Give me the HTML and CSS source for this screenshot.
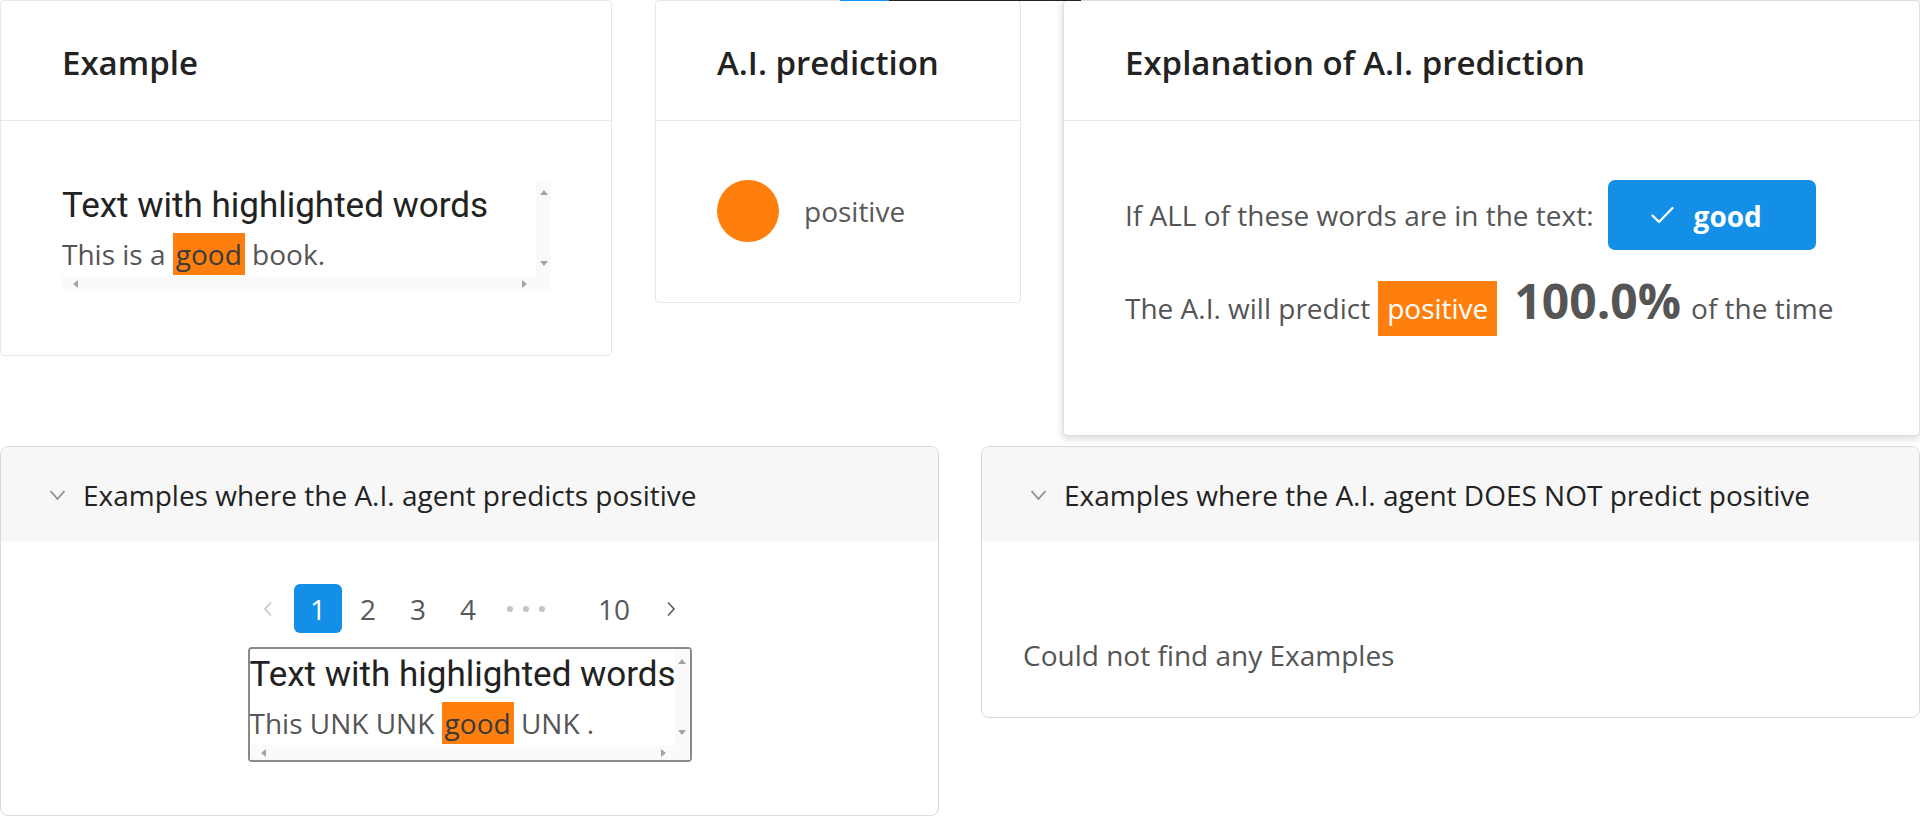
FILE: index.html
```html
<!DOCTYPE html>
<html lang="en">
<head>
<meta charset="utf-8">
<title>A.I. prediction explanation</title>
<link rel="stylesheet" href="styles.css">
</head>
<body>
<div class="topline"><span class="tl-blue"></span><span class="tl-dark"></span></div>

<div class="row row-top">
  <section class="card card-example">
    <div class="card-head"><h2 class="card-title">Example</h2></div>
    <div class="card-body body-example">
      <div class="scrollbox">
        <div class="sb-content">
          <div class="hl-title">Text with highlighted words</div>
          <div class="hl-text">This is a <span class="hl">good</span> book.</div>
        </div>
        <div class="sb-v"><i class="ar ar-up"></i><i class="ar ar-down"></i></div>
        <div class="sb-h"><i class="ar ar-left"></i><i class="ar ar-right"></i></div>
        <div class="sb-corner"></div>
      </div>
    </div>
  </section>

  <section class="card card-pred">
    <div class="card-head"><h2 class="card-title">A.I. prediction</h2></div>
    <div class="card-body body-pred">
      <span class="dot"></span>
      <span class="pred-label">positive</span>
    </div>
  </section>

  <section class="card card-expl">
    <div class="card-head"><h2 class="card-title">Explanation of A.I. prediction</h2></div>
    <div class="card-body body-expl">
      <div class="expl-row1">
        <span>If ALL of these words are in the text:</span>
        <button class="word-btn" type="button">
          <svg class="check" width="23" height="18" viewBox="0 0 23 18"><polyline points="1.5,9.5 8,16 21.5,2" fill="none" stroke="#fff" stroke-width="2.2" stroke-linecap="round" stroke-linejoin="round"/></svg>
          <span>good</span>
        </button>
      </div>
      <div class="expl-row2">
        <span>The A.I. will predict</span>
        <span class="tag">positive</span>
        <span class="pct">100.0%</span>
        <span class="tail">of the time</span>
      </div>
    </div>
  </section>
</div>

<div class="row row-bottom">
  <section class="collapse col-left">
    <div class="col-head">
      <svg class="chev" width="17" height="12" viewBox="0 0 17 12"><polyline points="1.5,2 8.5,10 15.5,2" fill="none" stroke="#8c8c8c" stroke-width="1.8"/></svg>
      <span>Examples where the A.I. agent predicts positive</span>
    </div>
    <div class="col-body body-pos">
      <nav class="pager">
        <span class="pg pg-prev"><svg width="10" height="16" viewBox="0 0 10 16"><polyline points="8,1.5 2,8 8,14.5" fill="none" stroke="#c4c4c4" stroke-width="1.6"/></svg></span>
        <span class="pg active">1</span>
        <span class="pg">2</span>
        <span class="pg">3</span>
        <span class="pg">4</span>
        <span class="pg pg-dots"><i></i><i></i><i></i></span>
        <span class="pg pg-last">10</span>
        <span class="pg pg-next"><svg width="10" height="16" viewBox="0 0 10 16"><polyline points="2,1.5 8,8 2,14.5" fill="none" stroke="#595959" stroke-width="1.6"/></svg></span>
      </nav>
      <div class="scrollbox bordered">
        <div class="sb-content">
          <div class="hl-title">Text with highlighted words</div>
          <div class="hl-text">This UNK UNK <span class="hl">good</span> UNK .</div>
        </div>
        <div class="sb-v"><i class="ar ar-up"></i><i class="ar ar-down"></i></div>
        <div class="sb-h"><i class="ar ar-left"></i><i class="ar ar-right"></i></div>
        <div class="sb-corner"></div>
      </div>
    </div>
  </section>

  <section class="collapse col-right">
    <div class="col-head">
      <svg class="chev" width="17" height="12" viewBox="0 0 17 12"><polyline points="1.5,2 8.5,10 15.5,2" fill="none" stroke="#8c8c8c" stroke-width="1.8"/></svg>
      <span>Examples where the A.I. agent DOES NOT predict positive</span>
    </div>
    <div class="col-body body-neg">Could not find any Examples</div>
  </section>
</div>
</body>
</html>
```

FILE: styles.css
```css
* { box-sizing: border-box; }

body {
  margin: 0;
  background: #fff;
  color: #555;
  font-family: "Open Sans", "Noto Sans", sans-serif;
  font-size: 28px;
}

.topline {
  position: absolute;
  top: 0;
  left: 840px;
  display: flex;
  height: 1px;
  z-index: 5;
}
.tl-blue { width: 49px; background: #1890ff; }
.tl-dark { width: 192px; background: #222; }

.row { display: flex; align-items: flex-start; }
.row-bottom { margin-top: 10px; }

/* cards */
.card {
  background: #fff;
  border: 1px solid #e8e8e8;
  border-radius: 4px;
}
.card-example { width: 612px; margin-right: 43px; }
.card-pred { width: 366px; margin-right: 42px; }
.card-expl {
  flex: 1;
  border-color: #dedede;
  box-shadow: 0 2px 8px rgba(0, 0, 0, 0.18);
}

.card-head {
  height: 120px;
  border-bottom: 1px solid #e8e8e8;
  padding: 4px 61px 0;
  display: flex;
  align-items: center;
}
.card-title {
  margin: 0;
  font-size: 33px;
  font-weight: 600;
  color: #222;
}

.card-body { padding: 59px 61px 64px; }
.body-pred {
  padding-bottom: 60px;
  display: flex;
  align-items: center;
  gap: 25px;
}
.body-expl { padding-bottom: 99px; }

.dot {
  width: 62px;
  height: 62px;
  border-radius: 50%;
  background: #ff7f0e;
}
.pred-label { color: #595959; }

/* explanation */
.expl-row1 {
  display: flex;
  align-items: center;
  height: 70px;
}
.word-btn {
  margin-left: 14px;
  width: 208px;
  height: 70px;
  border: 0;
  border-radius: 7px;
  background: #148fe8;
  color: #fff;
  display: flex;
  align-items: center;
  gap: 20px;
  padding: 2px 0 0 43px;
  font-family: "Open Sans", "Noto Sans", sans-serif;
  font-size: 28px;
  font-weight: 700;
}
.check { margin-top: -2px; }

.expl-row2 {
  margin-top: 31px;
  display: flex;
  align-items: baseline;
}
.tag {
  margin-left: 8px;
  padding: 9px 9px;
  line-height: 37px;
  background: #ff7f0e;
  color: #fff;
}
.pct {
  margin-left: 17px;
  font-size: 48px;
  font-weight: 700;
  line-height: 40px;
  color: #555;
}
.tail { margin-left: 10px; }

/* scroll box with classic scrollbars */
.scrollbox {
  display: grid;
  grid-template-columns: 1fr 15px;
  grid-template-rows: 96px 15px;
  width: 489px;
  background: #fff;
}
.scrollbox.bordered {
  width: 444px;
  margin: 14px auto 0;
  border: 2px solid #8a8a8a;
  border-radius: 4px;
}
.sb-content {
  overflow: hidden;
  white-space: nowrap;
}
.hl-title {
  font-family: Roboto, "Open Sans", sans-serif;
  font-size: 35px;
  line-height: 52px;
  color: #222;
}
.hl-text {
  font-size: 28px;
  line-height: 44px;
  color: #555;
}
.hl {
  background: #ff7f0e;
  color: #3a3a3a;
  padding: 2px 3px;
}
.sb-v {
  background: #fafafa;
  display: flex;
  flex-direction: column;
  justify-content: space-between;
  align-items: center;
  padding: 10px 0;
}
.sb-h {
  background: #fafafa;
  display: flex;
  justify-content: space-between;
  align-items: center;
  padding: 0 9px 0 11px;
}
.sb-corner { background: #fafafa; }

.ar {
  display: block;
  width: 0;
  height: 0;
  border-style: solid;
  border-color: transparent;
}
.ar-up { border-width: 0 4.5px 5px; border-bottom-color: #a3a3a3; }
.ar-down { border-width: 5px 4.5px 0; border-top-color: #a3a3a3; }
.ar-left { border-width: 4.5px 5px 4.5px 0; border-right-color: #a3a3a3; }
.ar-right { border-width: 4.5px 0 4.5px 5px; border-left-color: #a3a3a3; }

/* collapse panels */
.collapse {
  background: #fff;
  border: 1px solid #d9d9d9;
  border-radius: 8px;
  overflow: hidden;
}
.col-left { width: 939px; margin-right: 42px; }
.col-right { flex: 1; }

.col-head {
  height: 95px;
  background: #f7f7f7;
  display: flex;
  align-items: center;
  padding-left: 48px;
  color: #222;
  font-size: 28px;
}
.chev { margin-right: 17px; flex: none; }

.body-pos { padding: 42px 0 53px; }
.body-neg {
  padding: 94px 41px 43px;
  line-height: 38px;
  color: #555;
}

/* pagination */
.pager {
  display: flex;
  justify-content: center;
  align-items: center;
  height: 49px;
  gap: 2px;
}
.pg {
  width: 48px;
  height: 49px;
  border-radius: 6px;
  display: flex;
  align-items: center;
  justify-content: center;
  font-size: 28px;
  color: #595959;
}
.pg.active {
  background: #148fe8;
  color: #fff;
}
.pg-prev { margin-right: 0; }
.pg-dots {
  width: 64px;
  gap: 10px;
}
.pg-dots i {
  display: block;
  width: 6px;
  height: 6px;
  border-radius: 50%;
  background: #c4c4c4;
}
.pg-last { margin-left: 30px; }
.pg-next { margin-left: 7px; }
```
